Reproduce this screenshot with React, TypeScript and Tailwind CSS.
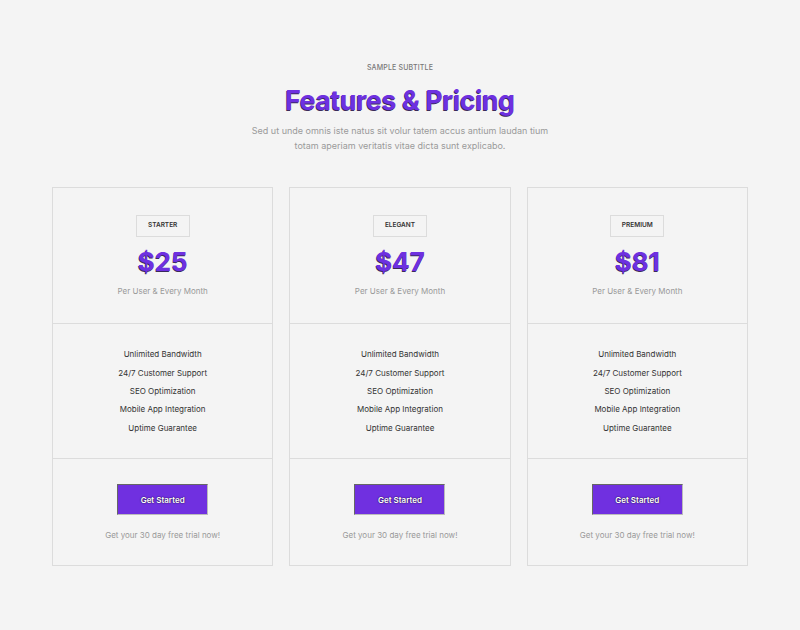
const plans = [
  { name: "STARTER", price: "$25" },
  { name: "ELEGANT", price: "$47" },
  { name: "PREMIUM", price: "$81" },
];

const features = [
  "Unlimited Bandwidth",
  "24/7 Customer Support",
  "SEO Optimization",
  "Mobile App Integration",
  "Uptime Guarantee",
];

const App = () => {
  return (
    <div className="min-h-screen w-full bg-[#f4f4f4] font-['Inter','Noto_Sans',sans-serif] pt-[63px]">
      <div className="flex flex-col items-center text-center">
        <p className="text-[7px] font-medium uppercase tracking-wide text-[#777] leading-[10px]">
          Sample Subtitle
        </p>
        <h1 className="mt-[10px] text-[26.5px] font-bold leading-[34px] tracking-[-0.3px] text-[#6e30e0] [text-shadow:-0.8px_0.8px_0_#3a2a5a]">
          Features &amp; Pricing
        </h1>
        <p className="mt-[6px] w-[320px] text-[9px] leading-[15px] text-[#9a9a9a]">
          Sed ut unde omnis iste natus sit volur tatem accus antium laudan tium
          totam aperiam veritatis vitae dicta sunt explicabo.
        </p>
      </div>

      <div className="mx-auto mt-[34px] grid w-[696px] grid-cols-3 gap-[16px]">
        {plans.map((p) => (
          <div key={p.name} className="flex flex-col border border-[#dcdcdc]">
            <div className="flex h-[136px] flex-col items-center border-b border-[#dcdcdc] pt-[27px]">
              <div className="flex h-[22px] w-[54px] items-center justify-center border border-[#dcdcdc] text-[6.5px] font-semibold text-[#333]">
                {p.name}
              </div>
              <div className="mt-[9px] text-[26px] font-bold leading-[32px] text-[#6e30e0] [text-shadow:-0.6px_0.6px_0_#3a2a5a]">
                {p.price}
              </div>
              <div className="mt-[7px] text-[8px] text-[#999]">Per User &amp; Every Month</div>
            </div>
            <div className="flex h-[135px] flex-col items-center justify-center gap-[6.3px] border-b border-[#dcdcdc]">
              {features.map((f) => (
                <div key={f} className="text-[8px] leading-[12px] text-[#333]">
                  {f}
                </div>
              ))}
            </div>
            <div className="flex flex-col items-center pt-[25px] pb-[24px]">
              <button className="h-[31px] w-[91px] border border-t-[#666] border-l-[#666] border-r-[#bbb] border-b-[#bbb] bg-[#7030e0] text-[8px] font-semibold text-white [text-shadow:0_0_1.5px_#000]">
                Get Started
              </button>
              <div className="mt-[14px] text-[8px] text-[#999]">Get your 30 day free trial now!</div>
            </div>
          </div>
        ))}
      </div>
    </div>
  );
};

export default App;
